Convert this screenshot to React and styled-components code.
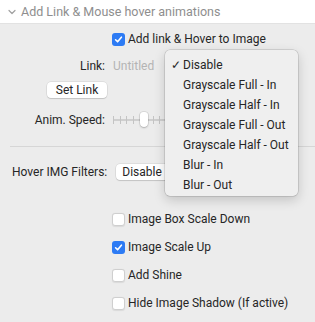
import React from "react";
import styled, { createGlobalStyle } from "styled-components";

const Global = createGlobalStyle`
  html, body { margin: 0; padding: 0; background: #ececec; }
  body { font-family: Roboto, "Noto Sans", "Liberation Sans", sans-serif; -webkit-font-smoothing: antialiased; }
`;

const Page = styled.div`
  position: relative;
  width: 315px;
  height: 322px;
  overflow: hidden;
  background: #ececec;
  color: #262626;
  font-size: 12px;
`;

const Header = styled.div`
  height: 24px;
  background: #ffffff;
  display: flex;
  align-items: center;
  padding-left: 7px;
  gap: 4px;
  color: #8e8e8e;
  font-size: 12.5px;
  border-bottom: 1px solid #e2e2e2;
  box-sizing: border-box;
`;

const Body = styled.div`
  display: flex;
  flex-direction: column;
`;

const Row = styled.div`
  height: ${(p) => p.$h || 18}px;
  margin-top: ${(p) => p.$mt || 0}px;
  display: flex;
  align-items: center;
  padding-left: ${(p) => p.$pl || 0}px;
`;

const FormRow = styled.div`
  display: grid;
  grid-template-columns: 105px 1fr;
  column-gap: 8px;
  align-items: center;
  height: ${(p) => p.$h || 18}px;
  margin-top: ${(p) => p.$mt || 0}px;
`;

const Label = styled.span`
  justify-self: end;
  white-space: nowrap;
`;

const Muted = styled.span`
  color: #b4b4b4;
`;

const CheckLabel = styled.label`
  display: flex;
  align-items: center;
  gap: 3px;
  white-space: nowrap;
`;

const Box = styled.span`
  width: 13px;
  height: 13px;
  box-sizing: border-box;
  border-radius: 3px;
  display: inline-flex;
  align-items: center;
  justify-content: center;
  background: ${(p) => (p.$on ? "#2d7bf4" : "#ffffff")};
  border: ${(p) => (p.$on ? "none" : "1px solid #cfcfcf")};
  box-shadow: ${(p) => (p.$on ? "none" : "0 0.5px 1px rgba(0,0,0,0.08)")};
`;

const Button = styled.button`
  justify-self: end;
  margin-right: -2px;
  width: 60px;
  height: 16px;
  padding: 0;
  border: none;
  border-radius: 4px;
  background: #ffffff;
  box-shadow: 0 0 0 0.5px rgba(0,0,0,0.12), 0 1px 1px rgba(0,0,0,0.12);
  font: inherit;
  font-size: 12px;
  color: #262626;
`;

const Slider = styled.div`
  position: relative;
  width: 54px;
  height: 18px;
  display: flex;
  align-items: center;
`;

const Track = styled.div`
  width: 100%;
  display: flex;
  justify-content: space-between;
  align-items: center;
  height: 8px;
  background: linear-gradient(#cfcfcf, #cfcfcf) center / 100% 2px no-repeat;
`;

const Tick = styled.span`
  width: 1px;
  height: 8px;
  background: #c4c4c4;
`;

const Thumb = styled.span`
  position: absolute;
  left: 27px;
  top: 1px;
  width: 8px;
  height: 15px;
  border-radius: 3px 3px 4px 4px;
  background: #ffffff;
  box-shadow: 0 0 0 0.5px rgba(0,0,0,0.15), 0 1px 2px rgba(0,0,0,0.2);
`;

const Separator = styled.div`
  height: 1px;
  background: #d6d6d6;
  margin: 17px 0 0 10px;
`;

const FilterRow = styled.div`
  display: flex;
  align-items: center;
  gap: 9px;
  padding-left: 12px;
  height: 18px;
  margin-top: 16px;
`;

const Popup = styled.div`
  width: 60px;
  height: 16px;
  background: #ffffff;
  border-radius: 4px;
  box-shadow: 0 0 0 0.5px rgba(0,0,0,0.12), 0 1px 1px rgba(0,0,0,0.12);
  display: flex;
  align-items: center;
  padding-left: 6px;
  box-sizing: border-box;
`;

const CheckList = styled.div`
  display: flex;
  flex-direction: column;
  padding-left: 112px;
  margin-top: 24px;
`;

const ListRow = styled.div`
  height: 28px;
  display: flex;
  align-items: center;
`;

const Menu = styled.div`
  position: absolute;
  left: 165px;
  top: 50px;
  width: 133px;
  padding: 5px 0 1px;
  background: #efefef;
  border-radius: 5px;
  box-shadow: 0 0 0 0.5px rgba(0,0,0,0.2), 0 4px 12px rgba(0,0,0,0.18);
  display: flex;
  flex-direction: column;
`;

const MenuItem = styled.div`
  height: 20px;
  display: flex;
  align-items: center;
  padding-left: 18px;
  position: relative;
  color: #262626;
  white-space: nowrap;
`;

const Check = styled.span`
  position: absolute;
  left: 6px;
  font-size: 12px;
`;

const Chevron = () => (
  <svg width="10" height="10" viewBox="0 0 10 10">
    <path d="M2 3.5 L5 6.5 L8 3.5" fill="none" stroke="#a0a0a0" strokeWidth="1.2" strokeLinecap="round" strokeLinejoin="round" />
  </svg>
);

const Checkbox = ({ on }) => (
  <Box $on={on}>
    {on && (
      <svg width="9" height="9" viewBox="0 0 9 9">
        <path d="M1.6 4.8 L3.6 6.8 L7.4 2.2" fill="none" stroke="#fff" strokeWidth="1.6" strokeLinecap="round" strokeLinejoin="round" />
      </svg>
    )}
  </Box>
);

const menuItems = [
  "Disable",
  "Grayscale Full - In",
  "Grayscale Half - In",
  "Grayscale Full - Out",
  "Grayscale Half - Out",
  "Blur - In",
  "Blur - Out",
];

const checks = [
  ["Image Box Scale Down", false],
  ["Image Scale Up", true],
  ["Add Shine", false],
  ["Hide Image Shadow (If active)", false],
];

export default function App() {
  return (
    <>
      <Global />
      <Page>
        <Header>
          <Chevron />
          <span>Add Link &amp; Mouse hover animations</span>
        </Header>
        <Body>
          <Row $mt={6} $pl={112}>
            <CheckLabel>
              <Checkbox on />
              Add link &amp; Hover to Image
            </CheckLabel>
          </Row>
          <FormRow $mt={9}>
            <Label>Link:</Label>
            <Muted>Untitled</Muted>
          </FormRow>
          <FormRow $mt={7} $h={16}>
            <Button>Set Link</Button>
          </FormRow>
          <FormRow $mt={13}>
            <Label>Anim. Speed:</Label>
            <Slider>
              <Track>
                {Array.from({ length: 9 }).map((_, i) => (
                  <Tick key={i} />
                ))}
              </Track>
              <Thumb />
            </Slider>
          </FormRow>
          <Separator />
          <FilterRow>
            <span>Hover IMG Filters:</span>
            <Popup>Disable</Popup>
          </FilterRow>
          <CheckList>
            {checks.map(([t, on]) => (
              <ListRow key={t}>
                <CheckLabel>
                  <Checkbox on={on} />
                  {t}
                </CheckLabel>
              </ListRow>
            ))}
          </CheckList>
        </Body>
        <Menu>
          {menuItems.map((m, i) => (
            <MenuItem key={m}>
              {i === 0 && <Check>✓</Check>}
              {m}
            </MenuItem>
          ))}
        </Menu>
      </Page>
    </>
  );
}
